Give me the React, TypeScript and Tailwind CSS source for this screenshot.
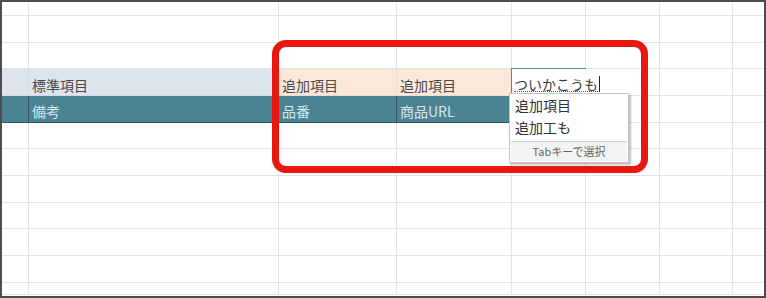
const colWidths = [27, 250, 118, 115, 74, 74, 73, 31];
const rowHeights = [14, 27, 26, 27, 27, 26, 27, 27, 26, 27, 27, 12];

const jp = "font-['Noto_Sans_CJK_JP','Noto_Sans',sans-serif]";

function HeaderRow() {
  return (
    <div className="flex h-[27px]">
      <div className="w-[27px] shrink-0 border-r border-b border-[#d5dbe3] bg-[#dde4ee]" />
      <div className="flex w-[250px] shrink-0 items-end border-r border-b border-[#d5dbe3] bg-[#dde4ee] px-[3px] pb-[3px] text-[14px] leading-none text-[#4a4a4a]">
        標準項目
      </div>
      <div className="flex w-[118px] shrink-0 items-end border-r border-b border-[#eddccf] bg-[#fbe8da] px-[3px] pb-[3px] text-[14px] leading-none text-[#4a4a4a]">
        追加項目
      </div>
      <div className="flex w-[115px] shrink-0 items-end border-r border-b border-[#eddccf] bg-[#fbe8da] px-[3px] pb-[3px] text-[14px] leading-none text-[#4a4a4a]">
        追加項目
      </div>
      <div className="relative -mt-px -ml-px flex h-[28px] w-[75px] shrink-0 items-end border-t border-l border-[#5d8a6c] bg-white px-[2px] pb-[4px] text-[14px] leading-none text-[#3a3a3a]">
        <span className="whitespace-nowrap border-b border-dotted border-[#555]">ついかこうも</span>
        <span className="ml-px h-[16px] w-px shrink-0 bg-[#222]" />
      </div>
      <div className="w-[74px] shrink-0 border-r border-b border-[#e4e4e4]" />
      <div className="w-[73px] shrink-0 border-r border-b border-[#e4e4e4]" />
      <div className="w-[31px] shrink-0 border-b border-[#e4e4e4]" />
    </div>
  );
}

function TealRow() {
  const cell = "flex shrink-0 items-end border-r border-b border-[#2e5560] bg-[#4b8393] px-[3px] pb-[4px] text-[14px] leading-none text-[#d3e8ee]";
  return (
    <div className="flex h-[27px]">
      <div className={`${cell} w-[27px]`} />
      <div className={`${cell} w-[250px]`}>備考</div>
      <div className={`${cell} w-[118px]`}>品番</div>
      <div className={`${cell} w-[115px]`}>商品URL</div>
      <div className="w-[74px] shrink-0 border-r border-b border-[#e4e4e4]" />
      <div className="w-[74px] shrink-0 border-r border-b border-[#e4e4e4]" />
      <div className="w-[73px] shrink-0 border-r border-b border-[#e4e4e4]" />
      <div className="w-[31px] shrink-0 border-b border-[#e4e4e4]" />
    </div>
  );
}

function PlainRow({ height }: { height: number }) {
  return (
    <div className="flex" style={{ height }}>
      {colWidths.map((w, i) => (
        <div
          key={i}
          className={`shrink-0 border-b border-[#e4e4e4] ${i < colWidths.length - 1 ? 'border-r' : ''}`}
          style={{ width: w }}
        />
      ))}
    </div>
  );
}

export default function App() {
  return (
    <div className={`relative h-[298px] w-[766px] overflow-hidden bg-white ${jp}`}>
      <div className="h-[298px] w-[766px] overflow-hidden border-2 border-[#4d4d4d]">
        {rowHeights.map((h, i) => {
          if (i === 3) return <HeaderRow key={i} />;
          if (i === 4) return <TealRow key={i} />;
          return <PlainRow key={i} height={h} />;
        })}
      </div>

      {/* autocomplete list */}
      <div className="absolute left-[509px] top-[93px] flex w-[120px] flex-col border border-[#c4c4c4] bg-white shadow-[2px_2px_2px_rgba(0,0,0,0.25)]">
        <div className="px-[5px] pt-[2px] pb-[3px] text-[14px] leading-[19px] text-[#333]">追加項目</div>
        <div className="px-[5px] pb-[4px] text-[14px] leading-[19px] text-[#333]">追加工も</div>
        <div className="mx-px mb-px flex h-[20px] items-center justify-center border-t border-[#cfcfcf] bg-[#f3f3f3] text-[11px] text-[#666]">
          Tabキーで選択
        </div>
      </div>

      {/* highlight */}
      <div className="absolute left-[272px] top-[40px] h-[133px] w-[376px] rounded-[14px] border-[7px] border-[#e8170f]" />
    </div>
  );
}
